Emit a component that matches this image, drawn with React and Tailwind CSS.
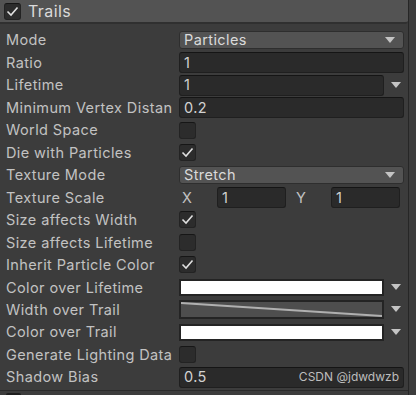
import React from "react";

const Arrow = ({ className = "" }) => (
  <svg width="10" height="7" viewBox="0 0 10 7" className={className}>
    <polygon points="0,0 10,0 5,6" fill="#c4c4c4" />
  </svg>
);

const Check = () => (
  <svg width="13" height="11" viewBox="0 0 13 11">
    <polyline points="1.5,5.5 5,9 11.5,1.5" fill="none" stroke="#e0e0e0" strokeWidth="1.6" />
  </svg>
);

const Checkbox = ({ checked }) => (
  <div className="w-[17px] h-[17px] rounded-[3px] bg-[#2c2c2c] border border-[#232323] border-t-[#161616] flex items-center justify-center">
    {checked && <Check />}
  </div>
);

const TextField = ({ value, className = "w-[225px]", children }) => (
  <div className={`h-[21px] rounded-[3px] bg-[#2a2a2a] border border-[#1f1f1f] border-t-[#151515] flex items-center pl-[4px] pr-[4px] text-[#d2d2d2] ${className}`}>
    <span className="flex-1">{value}</span>
    {children}
  </div>
);

const Dropdown = ({ value }) => (
  <div className="h-[18px] w-[225px] rounded-[3px] bg-[#535353] border border-[#2e2e2e] flex items-center pl-[4px] pr-[8px] text-[#dadada]">
    <span className="flex-1">{value}</span>
    <Arrow />
  </div>
);

const Row = ({ label, children }) => (
  <div className="h-[22.47px] flex items-center">
    <div className="w-[173px] shrink-0 pl-[6px] whitespace-nowrap text-[#c2c2c2]">{label}</div>
    <div className="flex-1 flex items-center pl-[6px]">{children}</div>
  </div>
);

const WithArrow = ({ children }) => (
  <div className="flex items-center">
    {children}
    <Arrow className="ml-[7px]" />
  </div>
);

export default function App() {
  return (
    <div
      className="w-[416px] h-[395px] bg-[#3c3c3c] overflow-hidden relative text-[14.5px] tracking-[0.4px]"
      style={{ fontFamily: "Inter, 'Noto Sans', sans-serif" }}
    >
      <div className="w-[409px] border-r border-[#262626] h-full flex flex-col">
        <div className="h-[24px] bg-[#535353] border-b-2 border-[#303030] rounded-br-[3px] flex items-center pl-[4px] gap-[7px]">
          <Checkbox checked />
          <span className="text-[#dadada] text-[16px]">Trails</span>
        </div>
        <div className="pt-[5px] flex flex-col">
          <Row label="Mode"><Dropdown value="Particles" /></Row>
          <Row label="Ratio"><TextField value="1" /></Row>
          <Row label="Lifetime"><WithArrow><TextField value="1" className="w-[205px]" /></WithArrow></Row>
          <Row label="Minimum Vertex Distan"><TextField value="0.2" /></Row>
          <Row label="World Space"><Checkbox /></Row>
          <Row label="Die with Particles"><Checkbox checked /></Row>
          <Row label="Texture Mode"><Dropdown value="Stretch" /></Row>
          <Row label="Texture Scale">
            <div className="flex items-center text-[#c2c2c2]">
              <span className="w-[38px] pl-[3px]">X</span>
              <TextField value="1" className="w-[69px]" />
              <span className="w-[45px] pl-[10px]">Y</span>
              <TextField value="1" className="w-[69px]" />
            </div>
          </Row>
          <Row label="Size affects Width"><Checkbox checked /></Row>
          <Row label="Size affects Lifetime"><Checkbox /></Row>
          <Row label="Inherit Particle Color"><Checkbox checked /></Row>
          <Row label="Color over Lifetime">
            <WithArrow>
              <div className="w-[205px] h-[17px] bg-white border-2 border-[#242424]" />
            </WithArrow>
          </Row>
          <Row label="Width over Trail">
            <WithArrow>
              <div className="w-[205px] h-[19px] bg-[#4e4e4e] border-2 border-[#242424] relative">
                <svg width="201" height="15" viewBox="0 0 201 15" className="absolute left-0 top-0">
                  <line x1="0" y1="1" x2="201" y2="14" stroke="#b0b0b0" strokeWidth="1.8" />
                </svg>
              </div>
            </WithArrow>
          </Row>
          <Row label="Color over Trail">
            <WithArrow>
              <div className="w-[205px] h-[17px] bg-white border-2 border-[#242424]" />
            </WithArrow>
          </Row>
          <Row label="Generate Lighting Data"><Checkbox /></Row>
          <Row label="Shadow Bias">
            <TextField value="0.5">
              <span className="text-[#bdbdbd] text-[12px] tracking-normal">CSDN @jdwdwzb</span>
            </TextField>
          </Row>
        </div>
        <div className="border-t border-[#2a2a2a] mt-[1px] pl-[6px] pt-[2px]">
          <div className="w-[15px] h-[10px] bg-[#1e1e1e] rounded-[2px]" />
        </div>
      </div>
    </div>
  );
}
